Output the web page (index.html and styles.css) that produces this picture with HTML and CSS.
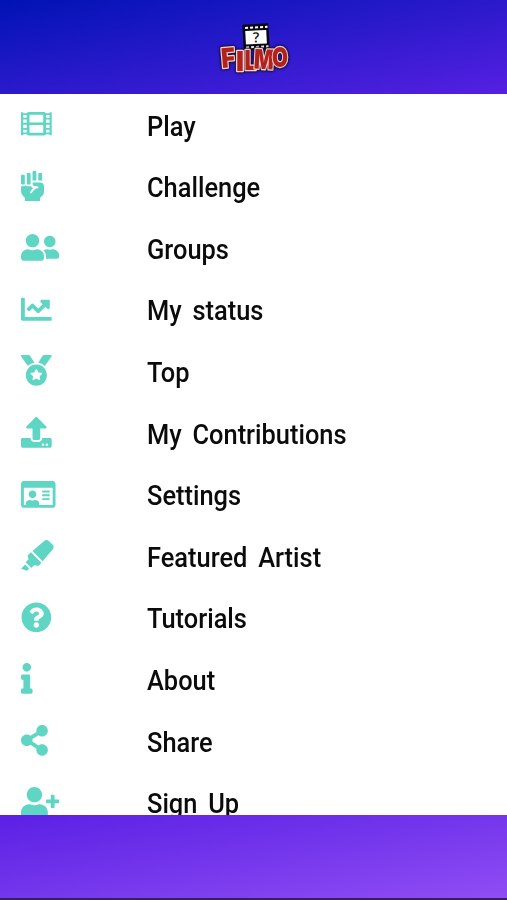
FILE: index.html
```html
<!DOCTYPE html>
<html lang="en">
<head>
<meta charset="utf-8">
<title>Filmo</title>
<link rel="stylesheet" href="styles.css">
</head>
<body>
<div class="app">
<header class="header">
<svg class="logo" viewBox="0 0 78 56" role="img" aria-label="Filmo">
<g transform="rotate(-3 39 16)">
<path fill="#080810" d="M27 4h26v26H27z"/>
<path fill="#fff" d="M29.500 10.500h21v13.500H29.500z"/>
<path stroke="#fff" stroke-width="2" stroke-dasharray="3 2" d="M29.500 7.500H52M29.500 27H52"/>
<text class="mark" x="40" y="22.500" text-anchor="middle">?</text>
</g>
<g class="letters">
<text transform="translate(6 48) rotate(-5)" textLength="14" lengthAdjust="spacingAndGlyphs">F</text>
<text transform="translate(20 50.500)" textLength="8" lengthAdjust="spacingAndGlyphs">I</text>
<text transform="translate(28.500 49.500)" textLength="12" lengthAdjust="spacingAndGlyphs">L</text>
<text transform="translate(37.500 48.500) rotate(3)" textLength="20" lengthAdjust="spacingAndGlyphs">M</text>
<text transform="translate(56 47)" textLength="16" lengthAdjust="spacingAndGlyphs">O</text>
</g>
</svg>
</header>
<main class="menu">
<a class="row"><svg class="icon" viewBox="0 0 640 512"><g fill="none" stroke="currentColor" stroke-width="36"><rect x="118" y="73" width="276" height="346" rx="12" stroke-width="46"/><path d="M118 246h276" stroke-width="44"/><path d="M18 55v382M494 55v382"/><path stroke-width="30" d="M16 84h100M16 162h100M16 246h100M16 330h100M16 408h100M396 84h100M396 162h100M396 246h100M396 330h100M396 408h100"/></g></svg><span class="label">Play</span></a>
<a class="row"><svg class="icon" viewBox="0 0 640 512"><path d="M255.98 160V16c0-8.84-7.16-16-16-16h-32c-8.84 0-16 7.16-16 16v146.930c5.020-1.780 10.340-2.930 15.970-2.930h48.030zm128 95.990c-.01-35.340-28.660-63.990-63.990-63.990H207.850c-8.780 0-15.900 7.070-15.900 15.850v.56c0 26.270 21.300 47.590 47.570 47.590h35.260c9.680 0 13.200 3.580 13.200 8v16.200c0 4.290-3.590 7.780-7.880 8-44.520 2.280-64.160 24.710-96.050 72.550l-6.310 9.470a7.994 7.994 0 0 1-11.090 2.220l-13.310-8.880a7.994 7.994 0 0 1-2.220-11.090l6.310-9.470c15.730-23.600 30.200-43.260 47.310-58.080-17.270-5.510-31.400-18.120-38.870-34.450-6.590 3.410-13.960 5.520-21.870 5.520h-32c-12.340 0-23.490-4.810-32-12.480C71.480 251.190 60.330 256 48 256H16c-5.640 0-10.970-1.150-16-2.950v77.930c0 33.950 13.480 66.500 37.490 90.510L63.990 448v64h255.980v-63.960l35.910-35.920A96.035 96.035 0 0 0 384 344.210l-.02-88.220zm-32.010-90.090V48c0-8.840-7.160-16-16-16h-32c-8.840 0-16 7.160-16 16v112h32c11.280 0 21.940 2.310 32 5.900zM16 224h32c8.840 0 16-7.160 16-16V80c0-8.840-7.160-16-16-16H16C7.160 64 0 71.160 0 80v128c0 8.840 7.160 16 16 16zm95.990 0h32c8.840 0 16-7.160 16-16V48c0-8.840-7.160-16-16-16h-32c-8.840 0-16 7.160-16 16v160c0 8.840 7.160 16 16 16z"/></svg><span class="label">Challenge</span></a>
<a class="row"><svg class="icon" viewBox="0 0 640 512"><path d="M192 256c61.900 0 112-50.100 112-112S253.900 32 192 32 80 82.100 80 144s50.100 112 112 112zm76.800 32h-8.300c-20.800 10-43.900 16-68.500 16s-47.600-6-68.500-16h-8.300C51.600 288 0 339.600 0 403.200V432c0 26.500 21.500 48 48 48h288c26.500 0 48-21.500 48-48v-28.800c0-63.600-51.600-115.200-115.200-115.200zM480 256c53 0 96-43 96-96s-43-96-96-96-96 43-96 96 43 96 96 96zm48 32h-3.800c-13.900 4.800-28.600 8-44.200 8s-30.300-3.200-44.200-8H432c-20.400 0-39.200 5.900-55.700 15.400 24.400 26.300 39.700 61.200 39.700 99.800v38.400c0 2.200-.5 4.300-.6 6.400H592c26.500 0 48-21.500 48-48 0-61.900-50.100-112-112-112z"/></svg><span class="label">Groups</span></a>
<a class="row"><svg class="icon" viewBox="0 0 640 512"><path d="M496 384H64V80c0-8.840-7.160-16-16-16H16C7.160 64 0 71.160 0 80v336c0 17.670 14.330 32 32 32h464c8.840 0 16-7.160 16-16v-32c0-8.840-7.160-16-16-16zM464 96H345.940c-21.380 0-32.090 25.850-16.970 40.970l32.400 32.400L288 242.750l-73.370-73.370c-12.500-12.500-32.760-12.500-45.250 0l-68.690 68.690c-6.250 6.250-6.250 16.380 0 22.630l22.620 22.620c6.250 6.250 16.380 6.250 22.630 0L192 237.250l73.370 73.370c12.500 12.500 32.760 12.500 45.250 0l96-96 32.400 32.400c15.120 15.120 40.970 4.410 40.970-16.970V112c.01-8.840-7.150-16-15.990-16z"/></svg><span class="label">My status</span></a>
<a class="row"><svg class="icon" viewBox="0 0 640 512"><path d="M223.750 130.750L154.620 15.540A31.997 31.997 0 0 0 127.180 0H16.030C3.080 0-4.500 14.570 2.920 25.180l111.270 158.960c29.720-27.770 67.520-46.830 109.560-53.390zM495.970 0H384.820c-11.240 0-21.660 5.900-27.440 15.540l-69.130 115.210c42.040 6.560 79.840 25.620 109.560 53.380L509.080 25.180C516.500 14.570 508.920 0 495.970 0zM256 160c-97.200 0-176 78.800-176 176s78.800 176 176 176 176-78.800 176-176-78.800-176-176-176zm92.520 157.260l-37.930 36.960 8.970 52.220c1.600 9.360-8.260 16.510-16.650 12.090L256 393.880l-46.900 24.650c-8.400 4.450-18.250-2.740-16.650-12.090l8.970-52.220-37.930-36.960c-6.820-6.640-3.050-18.230 6.350-19.590l52.430-7.640 23.430-47.520c2.110-4.280 6.190-6.390 10.280-6.390 4.110 0 8.220 2.140 10.330 6.390l23.430 47.520 52.430 7.640c9.400 1.360 13.170 12.950 6.350 19.590z"/></svg><span class="label">Top</span></a>
<a class="row"><svg class="icon" viewBox="0 0 640 512"><path d="M296 384h-80c-13.300 0-24-10.700-24-24V192h-87.700c-17.800 0-26.700-21.500-14.100-34.100L242.300 5.700c7.500-7.500 19.800-7.500 27.300 0l152.200 152.200c12.600 12.600 3.700 34.100-14.100 34.100H320v168c0 13.300-10.700 24-24 24zm216-8v112c0 13.300-10.700 24-24 24H24c-13.300 0-24-10.700-24-24V376c0-13.300 10.700-24 24-24h136v8c0 30.900 25.100 56 56 56h80c30.900 0 56-25.100 56-56v-8h136c13.300 0 24 10.700 24 24zm-124 88c0-11-9-20-20-20s-20 9-20 20 9 20 20 20 20-9 20-20zm64 0c0-11-9-20-20-20s-20 9-20 20 9 20 20 20 20-9 20-20z"/></svg><span class="label">My Contributions</span></a>
<a class="row"><svg class="icon" viewBox="0 0 640 512"><path d="M528 32H48C21.500 32 0 53.500 0 80v352c0 26.500 21.500 48 48 48h480c26.500 0 48-21.500 48-48V80c0-26.500-21.500-48-48-48zm0 400H303.200c.9-4.500.8 3.600.8-22.400 0-31.800-30.100-57.600-67.200-57.600-10.800 0-18.700 8-44.800 8-26.900 0-33.400-8-44.800-8-37.100 0-67.200 25.800-67.200 57.600 0 26-.2 17.900.8 22.400H48V144h480v288zm-168-80h112c4.400 0 8-3.600 8-8v-16c0-4.400-3.600-8-8-8H360c-4.400 0-8 3.600-8 8v16c0 4.400 3.600 8 8 8zm0-64h112c4.400 0 8-3.600 8-8v-16c0-4.400-3.600-8-8-8H360c-4.400 0-8 3.600-8 8v16c0 4.400 3.600 8 8 8zm0-64h112c4.400 0 8-3.600 8-8v-16c0-4.400-3.600-8-8-8H360c-4.400 0-8 3.600-8 8v16c0 4.400 3.600 8 8 8zM192 320c35.300 0 64-28.700 64-64s-28.700-64-64-64-64 28.700-64 64 28.700 64 64 64z"/></svg><span class="label">Settings</span></a>
<a class="row"><svg class="icon" viewBox="0 0 640 512"><path d="M0 479.980L99.920 512l35.450-35.450-67.040-67.040L0 479.980zm124.610-240.010a36.592 36.592 0 0 0-10.790 38.100l13.050 42.830-50.930 50.940 96.230 96.230 50.860-50.860 42.740 13.080c13.730 4.200 28.650-.01 38.150-10.780l35.550-41.640-173.340-173.340-41.520 35.440zm403.310-160.700l-63.200-63.200c-20.490-20.490-53.380-21.520-75.120-2.350L190.550 183.680l169.770 169.780L530.270 154.400c19.180-21.740 18.150-54.630-2.350-75.130z"/></svg><span class="label">Featured Artist</span></a>
<a class="row"><svg class="icon" viewBox="0 0 640 512"><path d="M504 256c0 136.997-111.043 248-248 248S8 392.997 8 256C8 119.083 119.043 8 256 8s248 111.083 248 248zM262.655 90c-54.497 0-89.255 22.957-116.549 63.758-3.536 5.286-2.353 12.415 2.715 16.258l34.699 26.310c5.205 3.947 12.621 3.008 16.665-2.122 17.864-22.658 30.113-35.797 57.303-35.797 20.429 0 45.698 13.148 45.698 32.958 0 14.976-12.363 22.667-32.534 33.976C247.128 238.528 216 254.941 216 296v4c0 6.627 5.373 12 12 12h56c6.627 0 12-5.373 12-12v-1.333c0-28.462 83.186-29.647 83.186-106.667 0-58.002-60.165-102-116.531-102zM256 338c-25.365 0-46 20.635-46 46 0 25.364 20.635 46 46 46s46-20.636 46-46c0-25.365-20.635-46-46-46z"/></svg><span class="label">Tutorials</span></a>
<a class="row"><svg class="icon" viewBox="0 0 640 512"><path d="M20 424.229h20V279.771H20c-11.046 0-20-8.954-20-20V212c0-11.046 8.954-20 20-20h112c11.046 0 20 8.954 20 20v212.229h20c11.046 0 20 8.954 20 20V492c0 11.046-8.954 20-20 20H20c-11.046 0-20-8.954-20-20v-47.771c0-11.046 8.954-20 20-20zM96 0C56.235 0 24 32.235 24 72s32.235 72 72 72 72-32.235 72-72S135.764 0 96 0z"/></svg><span class="label">About</span></a>
<a class="row"><svg class="icon" viewBox="0 0 640 512"><path d="M352 320c-22.608 0-43.387 7.819-59.790 20.895l-102.486-64.054a96.551 96.551 0 0 0 0-41.683l102.486-64.054C308.613 184.181 329.392 192 352 192c53.019 0 96-42.981 96-96S405.019 0 352 0s-96 42.981-96 96c0 7.158.79 14.130 2.276 20.841L155.790 180.895C139.387 167.819 118.608 160 96 160c-53.019 0-96 42.981-96 96s42.981 96 96 96c22.608 0 43.387-7.819 59.790-20.895l102.486 64.054A96.301 96.301 0 0 0 256 416c0 53.019 42.981 96 96 96s96-42.981 96-96-42.981-96-96-96z"/></svg><span class="label">Share</span></a>
<a class="row"><svg class="icon" viewBox="0 0 640 512"><path d="M624 208h-64v-64c0-8.800-7.200-16-16-16h-32c-8.800 0-16 7.200-16 16v64h-64c-8.800 0-16 7.200-16 16v32c0 8.800 7.200 16 16 16h64v64c0 8.800 7.200 16 16 16h32c8.800 0 16-7.200 16-16v-64h64c8.800 0 16-7.200 16-16v-32c0-8.800-7.200-16-16-16zm-400 48c70.700 0 128-57.300 128-128S294.700 0 224 0 96 57.300 96 128s57.300 128 128 128zm89.600 32h-16.700c-22.200 10.200-46.900 16-72.900 16s-50.600-5.800-72.900-16h-16.700C60.200 288 0 348.200 0 422.400V464c0 26.500 21.500 48 48 48h352c26.500 0 48-21.500 48-48v-41.600c0-74.200-60.200-134.400-134.400-134.400z"/></svg><span class="label">Sign Up</span></a>
</main>
<footer class="footer"></footer>
</div>
</body>
</html>
```
FILE: styles.css
```css
* { box-sizing: border-box; }
body { margin: 0; background: #fff; }
.app { display: flex; flex-direction: column; height: 900px; overflow: hidden; }
.header {
  flex: none;
  height: 94px;
  padding-top: 20px;
  padding-left: 3px;
  display: flex;
  justify-content: center;
  background: linear-gradient(to bottom right, #0013b4, #5520e2);
}
.logo { width: 78px; height: 56px; overflow: visible; }
.mark { font: 600 14px "Open Sans", sans-serif; fill: #111; }
.letters {
  font: 900 27px Inter, Roboto, sans-serif;
  fill: #b3211f;
  stroke: #eed6d0;
  stroke-width: 2.6px;
  stroke-linejoin: round;
  paint-order: stroke;
  filter: drop-shadow(0 0 1px #100c20) drop-shadow(0 0 1px #100c20);
}
.menu { flex: 1; min-height: 0; overflow: hidden; }
.row {
  display: grid;
  grid-template-columns: 126px 1fr;
  align-items: start;
  height: 61.6px;
  padding: 15px 0 0 21px;
}
.icon { width: 38.4px; height: 30.7px; fill: #5fd6c4; color: #5fd6c4; }
.label {
  justify-self: start;
  margin-top: -1.4px;
  font: 500 28.5px/38px Roboto, sans-serif;
  word-spacing: 5px;
  color: #0b0b0b;
  white-space: nowrap;
  transform: scaleX(0.892);
  transform-origin: left;
}
.footer {
  flex: none;
  height: 85px;
  border-bottom: 2px solid #34215c;
  background: linear-gradient(to bottom right, #5a20e4, #8f4df4);
}
```
